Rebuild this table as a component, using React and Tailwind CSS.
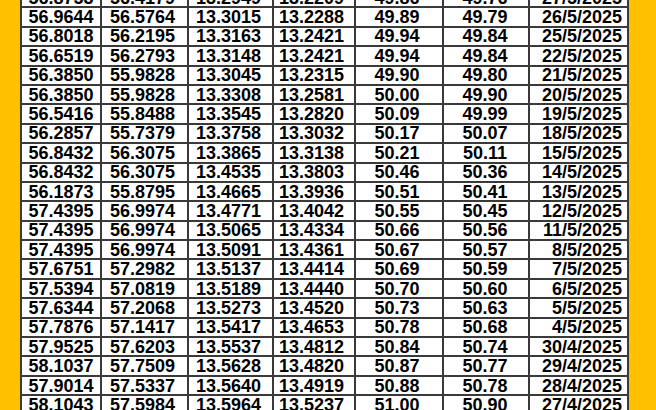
const rows = [
  ["56.8753", "56.4179", "13.2949", "13.2209", "49.86", "49.76", "27/5/2025"],
  ["56.9644", "56.5764", "13.3015", "13.2288", "49.89", "49.79", "26/5/2025"],
  ["56.8018", "56.2195", "13.3163", "13.2421", "49.94", "49.84", "25/5/2025"],
  ["56.6519", "56.2793", "13.3148", "13.2421", "49.94", "49.84", "22/5/2025"],
  ["56.3850", "55.9828", "13.3045", "13.2315", "49.90", "49.80", "21/5/2025"],
  ["56.3850", "55.9828", "13.3308", "13.2581", "50.00", "49.90", "20/5/2025"],
  ["56.5416", "55.8488", "13.3545", "13.2820", "50.09", "49.99", "19/5/2025"],
  ["56.2857", "55.7379", "13.3758", "13.3032", "50.17", "50.07", "18/5/2025"],
  ["56.8432", "56.3075", "13.3865", "13.3138", "50.21", "50.11", "15/5/2025"],
  ["56.8432", "56.3075", "13.4535", "13.3803", "50.46", "50.36", "14/5/2025"],
  ["56.1873", "55.8795", "13.4665", "13.3936", "50.51", "50.41", "13/5/2025"],
  ["57.4395", "56.9974", "13.4771", "13.4042", "50.55", "50.45", "12/5/2025"],
  ["57.4395", "56.9974", "13.5065", "13.4334", "50.66", "50.56", "11/5/2025"],
  ["57.4395", "56.9974", "13.5091", "13.4361", "50.67", "50.57", "8/5/2025"],
  ["57.6751", "57.2982", "13.5137", "13.4414", "50.69", "50.59", "7/5/2025"],
  ["57.5394", "57.0819", "13.5189", "13.4440", "50.70", "50.60", "6/5/2025"],
  ["57.6344", "57.2068", "13.5273", "13.4520", "50.73", "50.63", "5/5/2025"],
  ["57.7876", "57.1417", "13.5417", "13.4653", "50.78", "50.68", "4/5/2025"],
  ["57.9525", "57.6203", "13.5537", "13.4812", "50.84", "50.74", "30/4/2025"],
  ["58.1037", "57.7509", "13.5628", "13.4820", "50.87", "50.77", "29/4/2025"],
  ["57.9014", "57.5337", "13.5640", "13.4919", "50.88", "50.78", "28/4/2025"],
  ["58.1043", "57.5984", "13.5964", "13.5237", "51.00", "50.90", "27/4/2025"],
];

const cellCls = [
  "w-[80px] justify-center",
  "w-[87px] justify-center pr-[4px]",
  "w-[85px] justify-center pr-[4px]",
  "w-[82px] justify-center pr-[5px]",
  "w-[88px] justify-center pr-[4px]",
  "w-[86px] justify-center pr-[2px]",
  "w-[99px] justify-end pr-[5px]",
];

export default function App() {
  return (
    <div
      className="w-[656px] h-[410px] overflow-hidden bg-[#FFC000] flex"
      style={{ fontFamily: '"Liberation Sans", Arial, sans-serif' }}
    >
      <div className="ml-[20px] mt-[-11px] flex flex-col border-l-2 border-[#3a3a3a] bg-white self-start">
        {rows.map((r, i) => (
          <div key={i} className="flex h-[19.4px] border-b-2 border-[#3a3a3a] box-border">
            {r.map((c, j) => (
              <div
                key={j}
                className={`${cellCls[j]} flex items-center border-r-2 border-[#3a3a3a] box-border text-[18px] font-bold text-black leading-none`}
              >
                <span className="inline-block scale-y-[1.07]">{c}</span>
              </div>
            ))}
          </div>
        ))}
      </div>
    </div>
  );
}
